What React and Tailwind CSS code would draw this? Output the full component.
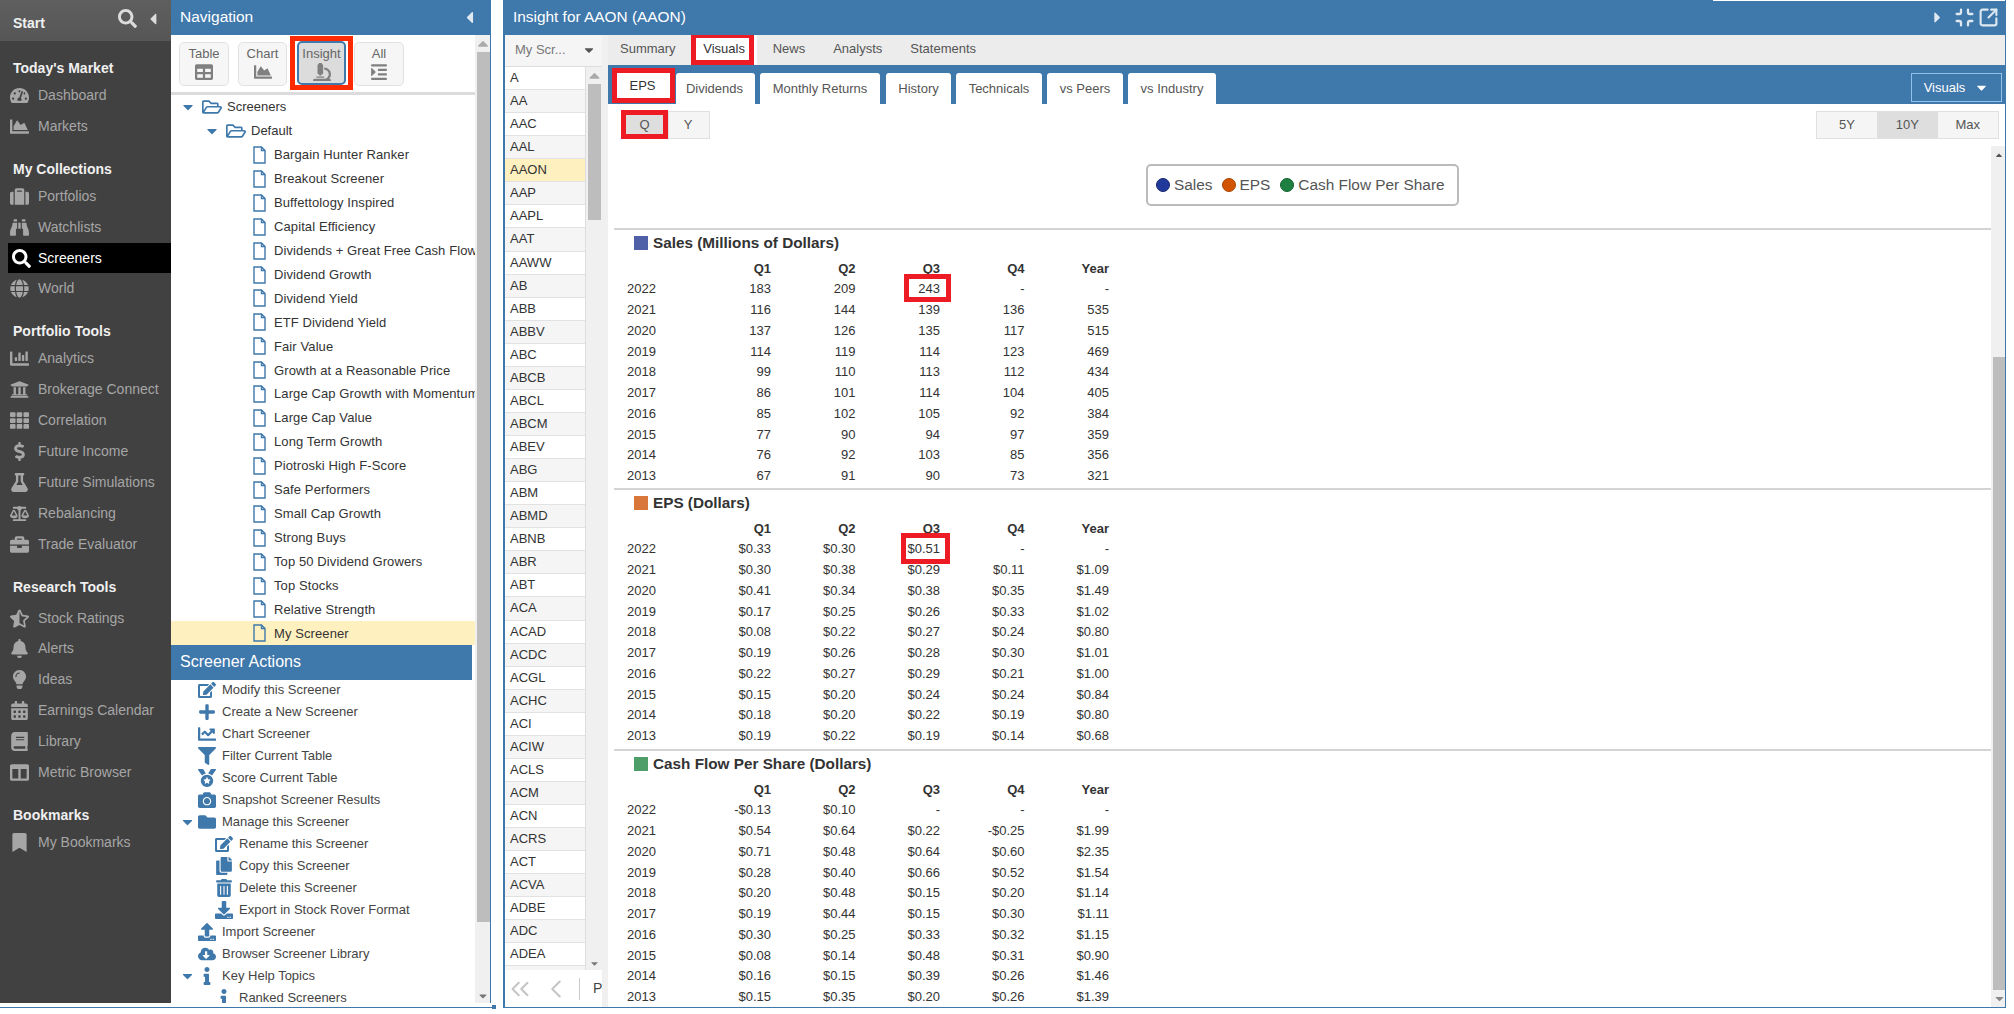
import React from "react";
import {
  FaSearch, FaCaretLeft, FaCaretRight, FaCaretDown, FaCaretUp, FaTachometerAlt, FaChartArea, FaSuitcase, FaBinoculars, FaGlobe,
  FaChartBar, FaUniversity, FaTh, FaDollarSign, FaFlask, FaBalanceScale, FaBriefcase, FaStarHalfAlt, FaBell, FaLightbulb,
  FaCalendarAlt, FaBook, FaColumns, FaBookmark, FaEdit, FaPlus, FaChartLine, FaFilter, FaMedal, FaCamera, FaFolder, FaCopy,
  FaTrashAlt, FaDownload, FaUpload, FaCloudDownloadAlt, FaInfo, FaTable, FaMicroscope, FaIndent, FaRegFolderOpen,
} from "react-icons/fa";
import { ChevronsLeft, ChevronLeft, Minimize, SquareArrowOutUpRight } from "lucide-react";

const menu = [
  { title: "Today's Market", items: [[FaTachometerAlt, "Dashboard"], [FaChartArea, "Markets"]] },
  { title: "My Collections", items: [[FaSuitcase, "Portfolios"], [FaBinoculars, "Watchlists"], [FaSearch, "Screeners"], [FaGlobe, "World"]] },
  { title: "Portfolio Tools", items: [[FaChartBar, "Analytics"], [FaUniversity, "Brokerage Connect"], [FaTh, "Correlation"], [FaDollarSign, "Future Income"], [FaFlask, "Future Simulations"], [FaBalanceScale, "Rebalancing"], [FaBriefcase, "Trade Evaluator"]] },
  { title: "Research Tools", extra: true, items: [[FaStarHalfAlt, "Stock Ratings"], [FaBell, "Alerts"], [FaLightbulb, "Ideas"], [FaCalendarAlt, "Earnings Calendar"], [FaBook, "Library"], [FaColumns, "Metric Browser"]] },
  { title: "Bookmarks", items: [[FaBookmark, "My Bookmarks"]] },
];

const screeners = ["Bargain Hunter Ranker", "Breakout Screener", "Buffettology Inspired", "Capital Efficiency", "Dividends + Great Free Cash Flow", "Dividend Growth", "Dividend Yield", "ETF Dividend Yield", "Fair Value", "Growth at a Reasonable Price", "Large Cap Growth with Momentum", "Large Cap Value", "Long Term Growth", "Piotroski High F-Score", "Safe Performers", "Small Cap Growth", "Strong Buys", "Top 50 Dividend Growers", "Top Stocks", "Relative Strength", "My Screener"];

const actions = [
  [FaEdit, "Modify this Screener", 0],
  [FaPlus, "Create a New Screener", 0],
  [FaChartLine, "Chart Screener", 0],
  [FaFilter, "Filter Current Table", 0],
  [FaMedal, "Score Current Table", 0],
  [FaCamera, "Snapshot Screener Results", 0],
  [FaFolder, "Manage this Screener", 0, true],
  [FaEdit, "Rename this Screener", 1],
  [FaCopy, "Copy this Screener", 1],
  [FaTrashAlt, "Delete this Screener", 1],
  [FaDownload, "Export in Stock Rover Format", 1],
  [FaUpload, "Import Screener", 0],
  [FaCloudDownloadAlt, "Browser Screener Library", 0],
  [FaInfo, "Key Help Topics", 0, true],
  [FaInfo, "Ranked Screeners", 1],
];

const tickers = ["A", "AA", "AAC", "AAL", "AAON", "AAP", "AAPL", "AAT", "AAWW", "AB", "ABB", "ABBV", "ABC", "ABCB", "ABCL", "ABCM", "ABEV", "ABG", "ABM", "ABMD", "ABNB", "ABR", "ABT", "ACA", "ACAD", "ACDC", "ACGL", "ACHC", "ACI", "ACIW", "ACLS", "ACM", "ACN", "ACRS", "ACT", "ACVA", "ADBE", "ADC", "ADEA", ""];

const years = [2022, 2021, 2020, 2019, 2018, 2017, 2016, 2015, 2014, 2013];

const sales = [
  ["183", "209", "243", "-", "-"], ["116", "144", "139", "136", "535"], ["137", "126", "135", "117", "515"], ["114", "119", "114", "123", "469"], ["99", "110", "113", "112", "434"],
  ["86", "101", "114", "104", "405"], ["85", "102", "105", "92", "384"], ["77", "90", "94", "97", "359"], ["76", "92", "103", "85", "356"], ["67", "91", "90", "73", "321"],
];
const eps = [
  ["$0.33", "$0.30", "$0.51", "-", "-"], ["$0.30", "$0.38", "$0.29", "$0.11", "$1.09"], ["$0.41", "$0.34", "$0.38", "$0.35", "$1.49"], ["$0.17", "$0.25", "$0.26", "$0.33", "$1.02"], ["$0.08", "$0.22", "$0.27", "$0.24", "$0.80"],
  ["$0.19", "$0.26", "$0.28", "$0.30", "$1.01"], ["$0.22", "$0.27", "$0.29", "$0.21", "$1.00"], ["$0.15", "$0.20", "$0.24", "$0.24", "$0.84"], ["$0.18", "$0.20", "$0.22", "$0.19", "$0.80"], ["$0.19", "$0.22", "$0.19", "$0.14", "$0.68"],
];
const cash = [
  ["-$0.13", "$0.10", "-", "-", "-"], ["$0.54", "$0.64", "$0.22", "-$0.25", "$1.99"], ["$0.71", "$0.48", "$0.64", "$0.60", "$2.35"], ["$0.28", "$0.40", "$0.66", "$0.52", "$1.54"], ["$0.20", "$0.48", "$0.15", "$0.20", "$1.14"],
  ["$0.19", "$0.44", "$0.15", "$0.30", "$1.11"], ["$0.30", "$0.25", "$0.33", "$0.32", "$1.15"], ["$0.08", "$0.14", "$0.48", "$0.31", "$0.90"], ["$0.16", "$0.15", "$0.39", "$0.26", "$1.46"], ["$0.15", "$0.35", "$0.20", "$0.26", "$1.39"],
];

const FileIcon = () => (
  <svg width="13" height="18" viewBox="0 0 13 18" fill="none" stroke="#3f78ab" strokeWidth="1.4" className="shrink-0">
    <path d="M1 1h7.5L12 4.5V17H1z" />
    <path d="M8.5 1v3.5H12" />
  </svg>
);

function Sidebar() {
  return (
    <aside className="w-[171px] shrink-0 bg-[#414141] flex flex-col overflow-hidden">
      <div className="h-[41px] shrink-0 bg-gradient-to-b from-[#5f5f5f] to-[#565656] flex items-center text-white">
        <span className="ml-[13px] mt-[5px] text-[14px] font-bold text-[#f0f0f0] flex-1">Start</span>
        <FaSearch className="text-[#dcdcdc] text-[19px] mb-[4px]" />
        <FaCaretLeft className="text-[#dcdcdc] text-[18px] ml-[7px] mr-[9px] mb-[4px]" />
      </div>
      {menu.map((sec) => (
        <div key={sec.title} className="mt-[15px] first:mt-[15px]">
          <div className={`h-[24px] pl-[13px] leading-[24px] text-[14px] font-bold text-[#f0f0f0] ${sec.extra ? "mb-[4px]" : ""}`}>{sec.title}</div>
          {sec.items.map(([Icon, label]) => {
            const on = label === "Screeners";
            return (
              <div key={label} className={`h-[30.9px] flex items-center text-[14px] ${on ? "ml-[8px] bg-black text-white" : "text-[#a6a6a6]"}`}>
                <span className={`flex justify-center text-[19px] shrink-0 ${on ? "w-[30px] pr-[6px] pl-[2px]" : "w-[38px] pl-[2px] pr-[2px]"}`}>
                  <Icon className={on ? "text-white" : "text-[#a6a6a6]"} />
                </span>
                <span>{label}</span>
              </div>
            );
          })}
        </div>
      ))}
    </aside>
  );
}

function NavButton({ label, Icon, active }) {
  return (
    <div className={`h-[44px] flex flex-col items-center text-[13px] leading-[17px] pt-[2px] rounded-[5px] ${active ? "w-[49px] bg-[#dcdcdc] border-2 border-[#3f78ab] text-[#666]" : "w-full border border-[#e2e2e2] bg-[#f6f6f6] text-[#666]"}`}>
      {label}
      <Icon className="text-[#808080] text-[18px] mt-[1px]" />
    </div>
  );
}

function NavPanel() {
  return (
    <section className="w-[320px] shrink-0 flex flex-col border-r border-[#3f78ab]">
      <div className="h-[35px] shrink-0 bg-[#3f78ab] flex items-center justify-between pl-[9px] pr-[11px] text-white">
        <span className="text-[15.5px] -mt-[1px]">Navigation</span>
        <FaCaretLeft className="text-[#dfe9f2] text-[19px] -mt-[1px]" />
      </div>
      <div className="flex flex-1 min-h-0">
        <div className="w-[304px] flex flex-col overflow-hidden">
          <div className="h-[60px] shrink-0 flex items-start pt-[1px] pl-[8px] border-b-[3px] border-[#dcdcdc]">
            <div className="w-[50px] mt-[6px]"><NavButton label="Table" Icon={FaTable} /></div>
            <div className="w-[49px] ml-[9px] mt-[6px]"><NavButton label="Chart" Icon={FaChartArea} /></div>
            <div className="w-[63px] h-[54px] ml-[3px] border-[5px] border-[#ff2a00] flex justify-center">
              <NavButton label="Insight" Icon={FaMicroscope} active />
            </div>
            <div className="w-[50px] ml-[1px] mt-[6px]"><NavButton label="All" Icon={FaIndent} /></div>
          </div>
          <div className="h-[550px] shrink-0 overflow-hidden text-[13px] text-[#333]">
            <div className="h-[24px] flex items-center pl-[11px]">
              <FaCaretDown className="text-[#3f78ab] text-[16px] w-[12px]" />
              <FaRegFolderOpen className="text-[#3f78ab] text-[20px] ml-[8px]" />
              <span className="ml-[5px]">Screeners</span>
            </div>
            <div className="h-[24px] flex items-center pl-[35px]">
              <FaCaretDown className="text-[#3f78ab] text-[16px] w-[12px]" />
              <FaRegFolderOpen className="text-[#3f78ab] text-[20px] ml-[8px]" />
              <span className="ml-[5px]">Default</span>
            </div>
            {screeners.map((s) => (
              <div key={s} className={`h-[23.93px] flex items-center pl-[82px] whitespace-nowrap ${s === "My Screener" ? "bg-[#fff0bf]" : ""}`}>
                <FileIcon />
                <span className="ml-[8px] tracking-[0.1px]">{s}</span>
              </div>
            ))}
          </div>
          <div className="h-[35px] shrink-0 w-[301px] bg-[#3f78ab] text-white text-[16px] flex items-center pl-[9px] pb-[2px]">Screener Actions</div>
          <div className="flex-1 overflow-hidden text-[13px] text-[#444]">
            {actions.map(([Icon, label, sub, open]) => (
              <div key={label} className={`h-[22px] flex items-center whitespace-nowrap ${sub ? "pl-[35px]" : "pl-[11px]"} ${label === "Modify this Screener" ? "-mt-px" : ""}`}>
                {open ? <FaCaretDown className="text-[#3f78ab] text-[16px] w-[11px] shrink-0" /> : <span className="w-[11px] shrink-0" />}
                <span className={`flex justify-center text-[#3f78ab] text-[18px] shrink-0 w-[20px] ${sub ? "-ml-[3px]" : "ml-[4px]"}`}><Icon /></span>
                <span className="ml-[5px]">{label}</span>
              </div>
            ))}
          </div>
        </div>
        <div className="w-[15px] bg-[#f0f0f0] flex flex-col items-center">
          <FaCaretUp className="text-[#aaa] text-[12px] h-[17px] shrink-0" />
          <div className="w-[13px] ml-[1px] h-[870px] bg-[#bdbdbd]" />
          <div className="flex-1 flex items-end pb-[1px]"><FaCaretDown className="text-[#777] text-[12px]" /></div>
        </div>
      </div>
    </section>
  );
}

function TickerColumn() {
  return (
    <div className="w-[97px] shrink-0 flex flex-col">
      <div className="h-[32px] shrink-0 bg-[#f5f5f5] border-b border-[#ddd] flex items-center pl-[10px] pr-[6px] pb-px text-[13px] text-[#777]">
        <span className="flex-1">My Scr...</span>
        <FaCaretDown className="text-[#555] text-[14px]" />
      </div>
      <div className="h-[903px] shrink-0 flex overflow-hidden">
        <div className="w-[81px] border-r border-[#ddd] text-[13px] text-[#333]">
          {tickers.map((t, i) => (
            <div key={i} className={`h-[23.07px] border-b border-[#e2e2e2] pl-[5px] leading-[22px] ${t === "AAON" ? "bg-[#fff0bf]" : i % 2 ? "bg-[#f5f5f5]" : "bg-white"}`}>{t}</div>
          ))}
        </div>
        <div className="w-[16px] bg-[#f0f0f0] flex flex-col items-center pl-[1px]">
          <FaCaretUp className="text-[#aaa] text-[11px] h-[17px] shrink-0" />
          <div className="w-[13px] h-[136px] bg-[#bdbdbd]" />
          <div className="flex-1 flex items-end pb-[1px]"><FaCaretDown className="text-[#777] text-[11px]" /></div>
        </div>
      </div>
      <div className="flex-1 bg-white flex items-center overflow-hidden whitespace-nowrap">
        <ChevronsLeft size={30} strokeWidth={1.6} className="text-[#c4c4c4] shrink-0" />
        <ChevronLeft size={30} strokeWidth={1.6} className="text-[#c4c4c4] shrink-0 ml-[6px]" />
        <span className="w-px h-[22px] bg-[#ccc] ml-[8px] shrink-0" />
        <span className="ml-[13px] text-[14px] text-[#444]">Page</span>
      </div>
    </div>
  );
}

function DataSection({ title, swatch, rows, mark, height }) {
  return (
    <div className={`${height} shrink-0 border-t-2 border-[#d4d4d4]`}>
      <div className="h-[26px] flex items-center pl-[20px]">
        <span className={`w-[14px] h-[14px] ${swatch}`} />
        <span className="ml-[5px] text-[15.3px] font-bold text-[#333]">{title}</span>
      </div>
      <div className="ml-[13px] mt-[2.5px] grid grid-cols-[59.5px_84.5px_84.5px_84.5px_84.5px_84.5px] text-[13px] text-[#333] leading-[20.75px]">
        <div />
        {["Q1", "Q2", "Q3", "Q4", "Year"].map((h) => (
          <div key={h} className="text-right font-bold">{h}</div>
        ))}
        {rows.map((r, i) => (
          <React.Fragment key={years[i]}>
            <div>{years[i]}</div>
            {r.map((v, j) => (
              <div key={j} className="text-right relative">
                {v}
                {mark && i === 0 && j === 2 && (
                  <span className={`absolute border-[5px] border-[#ed1c24] ${mark}`} />
                )}
              </div>
            ))}
          </React.Fragment>
        ))}
      </div>
    </div>
  );
}

function Insight() {
  return (
    <main className="w-[1503px] h-[1008px] shrink-0 flex flex-col border-l-2 border-r border-b border-[#3f78ab]">
      <div className="h-[35px] shrink-0 bg-[#3f78ab] flex items-center text-white pl-[8px] pr-[6px] relative">
        <span className="absolute right-0 top-0 h-px w-[292px] bg-white" />
        <span className="flex-1 text-[15.4px] -mt-[1px]">Insight for AAON (AAON)</span>
        <FaCaretRight className="text-[#dfe9f2] text-[17px] -mt-[1px]" />
        <Minimize size={21} strokeWidth={2.6} className="text-[#dfe9f2] ml-[8px] -mt-[1px]" />
        <SquareArrowOutUpRight size={21} strokeWidth={2.4} className="text-[#dfe9f2] ml-[3px] -mt-[1px]" />
      </div>
      <div className="flex-1 min-h-0 flex">
        <TickerColumn />
        <div className="w-[6px] shrink-0 bg-[#f0f0f0]" />
        <div className="flex-1 min-w-0 flex flex-col">
          <div className="h-[30px] shrink-0 bg-[#ececec] flex items-start text-[13px] text-[#555] leading-[28px]">
            <span className="pl-[12px] pr-[15px]">Summary</span>
            <div className="w-[66px] h-[30px] bg-white">
              <div className="w-[63px] h-[32px] -mt-[2px] border-[5px] border-[#ed1c24] bg-white flex items-center justify-center pl-[4px] text-[#333]">Visuals</div>
            </div>
            <span className="pl-[16px] pr-[14px]">News</span>
            <span className="px-[14px]">Analysts</span>
            <span className="px-[14px]">Statements</span>
          </div>
          <div className="h-[39px] shrink-0 bg-[#3f78ab] flex items-end text-[13px] text-[#555]">
            <div className="w-[63px] h-[35px] ml-[4px] mb-px border-[5px] border-[#ed1c24] bg-white flex items-center justify-center pr-[2px] text-[#333]">EPS</div>
            <div className="w-[79px] ml-px h-[31px] bg-white rounded-t-[3px] flex items-center justify-center pr-[2px]">Dividends</div>
            <div className="w-[120px] ml-[5px] h-[31px] bg-white rounded-t-[3px] flex items-center justify-center">Monthly Returns</div>
            <div className="w-[65px] ml-[6px] h-[31px] bg-white rounded-t-[3px] flex items-center justify-center">History</div>
            <div className="w-[86px] ml-[5px] h-[31px] bg-white rounded-t-[3px] flex items-center justify-center">Technicals</div>
            <div className="w-[76px] ml-[5px] h-[31px] bg-white rounded-t-[3px] flex items-center justify-center">vs Peers</div>
            <div className="w-[88px] ml-[5px] h-[31px] bg-white rounded-t-[3px] flex items-center justify-center">vs Industry</div>
            <div className="ml-auto mr-[3px] mb-[2px] w-[91px] h-[29px] border border-[#8fc0ee] text-white flex items-center justify-center gap-[9px]">
              Visuals <FaCaretDown className="text-[15px]" />
            </div>
          </div>
          <div className="h-[42px] shrink-0 flex items-start justify-between pt-[7px] text-[13px] text-[#555]">
            <div className="ml-[13px] flex">
              <div className="w-[47px] h-[29px] -mt-px border-[5px] border-[#ed1c24] bg-[#dedede] flex items-center justify-center">Q</div>
              <div className="w-[42px] h-[28px] bg-[#f5f5f5] border border-[#e0e0e0] flex items-center justify-center pr-[2px]">Y</div>
            </div>
            <div className="mr-[6px] flex h-[28px] border border-[#e0e0e0] bg-[#f5f5f5]">
              <div className="w-[60px] flex items-center justify-center">5Y</div>
              <div className="w-[60.5px] flex items-center justify-center bg-[#dedede]">10Y</div>
              <div className="w-[60.5px] flex items-center justify-center">Max</div>
            </div>
          </div>
          <div className="flex-1 min-h-0 flex">
            <div className="flex-1 min-w-0 pl-[6px] overflow-hidden flex flex-col">
              <div className="h-[82px] shrink-0 pt-[18px] flex justify-center">
                <div className="w-[313px] h-[42px] border-2 border-[#bbb] rounded-[5px] flex items-center pl-[8px] text-[15.4px] text-[#555]">
                  <span className="w-[14px] h-[14px] rounded-full bg-[#21399a] border border-[#15276e]" />
                  <span className="ml-[4px]">Sales</span>
                  <span className="w-[14px] h-[14px] rounded-full bg-[#d35400] border border-[#a84300] ml-[9px]" />
                  <span className="ml-[4px]">EPS</span>
                  <span className="w-[14px] h-[14px] rounded-full bg-[#1e8040] border border-[#14602e] ml-[10px]" />
                  <span className="ml-[4px]">Cash Flow Per Share</span>
                </div>
              </div>
              <DataSection height="h-[260px]" title="Sales (Millions of Dollars)" swatch="bg-[#4f5fa8]" rows={sales} mark="right-[-11px] top-[-5px] w-[47px] h-[28px]" />
              <DataSection height="h-[261px]" title="EPS (Dollars)" swatch="bg-[#d9773a]" rows={eps} mark="right-[-10px] top-[-6px] w-[49px] h-[31px]" />
              <DataSection height="h-[261px]" title="Cash Flow Per Share (Dollars)" swatch="bg-[#4e9e6a]" rows={cash} />
            </div>
            <div className="w-[14px] shrink-0 bg-[#f0f0f0] flex flex-col items-center pl-[2px]">
              <div className="h-[211px] shrink-0 w-full flex justify-center pt-[4px]"><FaCaretUp className="text-[#555] text-[10px]" /></div>
              <div className="w-[12px] h-[633px] bg-[#bdbdbd]" />
              <div className="flex-1 flex items-center"><FaCaretDown className="text-[#888] text-[13px]" /></div>
            </div>
          </div>
        </div>
      </div>
    </main>
  );
}

export default function App() {
  return (
    <div className="w-[2014px] h-[1014px] overflow-hidden bg-white flex font-['Liberation_Sans',Arial,sans-serif]">
      <div className="w-[496px] shrink-0 flex flex-col">
        <div className="h-[1003px] flex">
          <Sidebar />
          <NavPanel />
        </div>
        <div className="mt-[4px] h-px bg-[#3f78ab]" />
        <div className="w-[4px] h-[4px] bg-[#3f78ab] ml-auto -mt-[3px]" />
      </div>
      <div className="w-[7px] shrink-0" />
      <Insight />
    </div>
  );
}
